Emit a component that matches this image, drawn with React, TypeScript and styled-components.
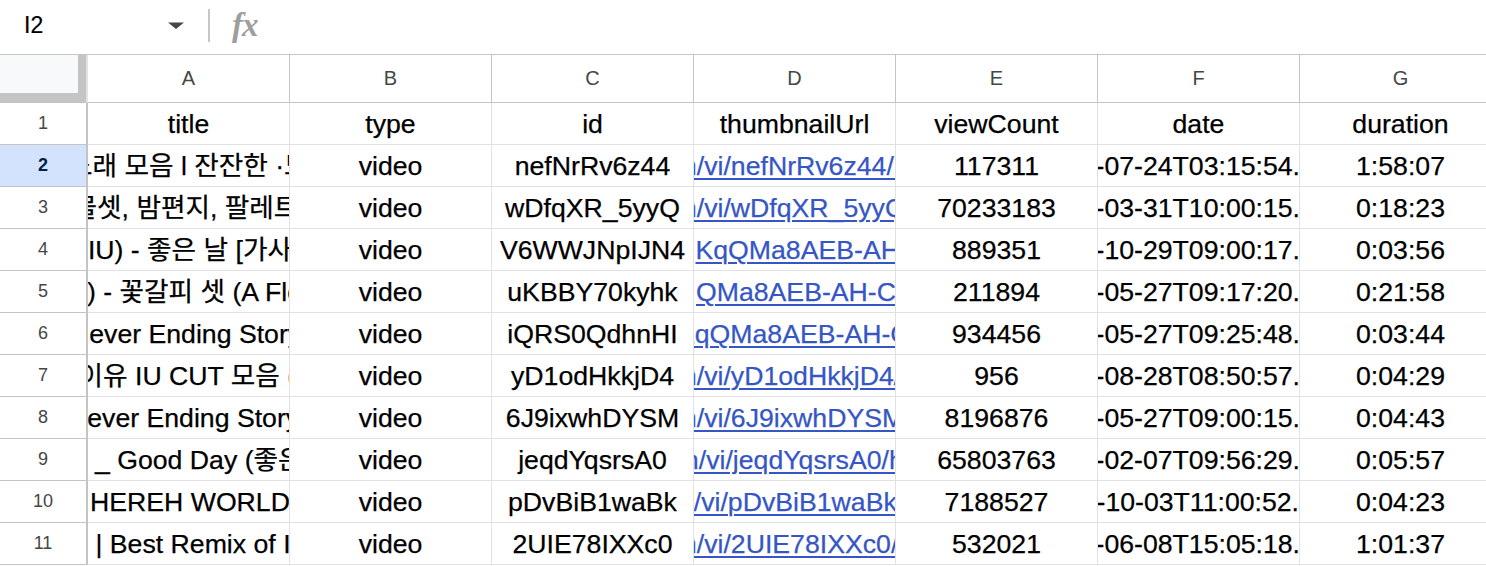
import styled, { createGlobalStyle } from 'styled-components'

const GlobalStyle = createGlobalStyle`
  html, body {
    margin: 0;
    background: #fff;
  }
  body {
    font-family: 'Liberation Sans', 'Noto Sans CJK KR', Arial, sans-serif;
  }
`

const Sheet = styled.div`
  width: 1486px;
  height: 566px;
  overflow: hidden;
  background: #fff;
`

const FormulaBar = styled.div`
  display: flex;
  align-items: center;
  height: 55px;
  padding-bottom: 3px;
  box-sizing: border-box;
  border-bottom: 1px solid #c4c7c5;
`

const NameBox = styled.div`
  width: 200px;
  box-sizing: border-box;
  padding: 0 16px 0 24px;
  display: flex;
  align-items: center;
  justify-content: space-between;
  font-size: 23px;
  color: #000;
  -webkit-text-stroke: 0.2px currentColor;
`

const Divider = styled.div`
  width: 2px;
  height: 33px;
  margin-left: 8px;
  background: #c7c7c7;
`

const FxLabel = styled.span`
  margin-left: 22px;
  font-family: 'Liberation Serif', serif;
  font-style: italic;
  font-weight: 700;
  font-size: 33px;
  letter-spacing: -1px;
  color: #9e9e9e;
`

const Grid = styled.div`
  display: grid;
  grid-template-columns: 88px repeat(7, 202px);
  grid-template-rows: 48px;
  grid-auto-rows: 42px;
`

const Corner = styled.div`
  box-sizing: border-box;
  background: #c4c4c4;
  border-right: 2px solid #e3e3e3;
  border-bottom: 1px solid #c4c4c4;

  &::before {
    content: '';
    display: block;
    width: 78px;
    height: 38px;
    background: #f8f9fa;
  }
`

const ColHead = styled.div`
  box-sizing: border-box;
  display: flex;
  align-items: center;
  justify-content: center;
  border-right: 1px solid #c4c4c4;
  border-bottom: 1px solid #c4c4c4;
  font-size: 20px;
  color: #444746;
`

const RowHead = styled.div<{ $active?: boolean }>`
  box-sizing: border-box;
  display: flex;
  align-items: center;
  justify-content: center;
  border-right: 2px solid #c4c4c4;
  border-bottom: 1px solid #c4c4c4;
  font-size: 18px;
  background: ${p => (p.$active ? '#d3e3fd' : '#fff')};
  color: ${p => (p.$active ? '#041e49' : '#444746')};
  font-weight: ${p => (p.$active ? 700 : 400)};
`

const Cell = styled.div<{ $start?: boolean }>`
  box-sizing: border-box;
  display: flex;
  align-items: flex-end;
  justify-content: ${p => (p.$start ? 'flex-start' : 'center')};
  padding-bottom: 5px;
  overflow: hidden;
  border-right: 1px solid #e1e1e1;
  border-bottom: 1px solid #e1e1e1;
  font-size: 26.67px;
  line-height: 30px;
  white-space: nowrap;
  color: #000;
  -webkit-text-stroke: 0.25px currentColor;
`

// text scrolled sideways inside a clipped cell
const Slice = styled.span<{ $shift: number }>`
  flex: none;
  margin-left: ${p => p.$shift}px;
`

const LinkSlice = styled(Slice)`
  color: #3556c4;
  text-decoration: underline;
  text-decoration-thickness: 2px;
  text-underline-offset: 3px;
`

const Caret = () => (
  <svg width="16" height="8" viewBox="0 0 16 8">
    <path d="M0 0.5 H16 L8 7 Z" fill="#444746" />
  </svg>
)

const thumbUrl = (id: string) => `https://i.ytimg.com/vi/${id}/hqdefault.jpg`
const sqp = 'KqQMa8AEB-AH-CYAC0AWKAgwIABABGGUgXihUMA8='

type Row = {
  title: [string, number]
  id: string
  thumb: [string, number]
  views: string
  date: string
  duration: string
}

const rows: Row[] = [
  { title: ['노래 모음 l 잔잔한 ·노래', -20], id: 'nefNrRv6z44', thumb: [thumbUrl('nefNrRv6z44'), -212], views: '117311', date: '2023-07-24T03:15:54.000Z', duration: '1:58:07' },
  { title: ['스물셋, 밤편지, 팔레트, 너랑 나', -40], id: 'wDfqXR_5yyQ', thumb: [thumbUrl('wDfqXR_5yyQ'), -212], views: '70233183', date: '2019-03-31T10:00:15.000Z', duration: '0:18:23' },
  { title: ['(IU) - 좋은 날 [가사/Lyrics]', -9], id: 'V6WWJNpIJN4', thumb: [sqp, 1.5], views: '889351', date: '2015-10-29T09:00:17.000Z', duration: '0:03:56' },
  { title: [') - 꽃갈피 셋 (A Flower Bookmark 3)', -1], id: 'uKBBY70kyhk', thumb: [sqp.slice(2), 2], views: '211894', date: '2023-05-27T09:17:20.000Z', duration: '0:21:58' },
  { title: ['Never Ending Story', -18], id: 'iQRS0QdhnHI', thumb: [sqp, -17], views: '934456', date: '2023-05-27T09:25:48.000Z', duration: '0:03:44' },
  { title: ['아이유 IU CUT 모음 (2020)', -34], id: 'yD1odHkkjD4', thumb: [thumbUrl('yD1odHkkjD4'), -212], views: '956', date: '2020-08-28T08:50:57.000Z', duration: '0:04:29' },
  { title: ['Never Ending Story (Live)', -20], id: '6J9ixwhDYSM', thumb: [thumbUrl('6J9ixwhDYSM'), -212], views: '8196876', date: '2023-05-27T09:00:15.000Z', duration: '0:04:43' },
  { title: ['_ Good Day (좋은 날)', 7], id: 'jeqdYqsrsA0', thumb: [thumbUrl('jeqdYqsrsA0'), -210], views: '65803763', date: '2017-02-07T09:56:29.000Z', duration: '0:05:57' },
  { title: ['HEREH WORLD TOUR', 2], id: 'pDvBiB1waBk', thumb: [thumbUrl('pDvBiB1waBk'), -215], views: '7188527', date: '2024-10-03T11:00:52.000Z', duration: '0:04:23' },
  { title: ['| Best Remix of IU Songs', 7.5], id: '2UIE78IXXc0', thumb: [thumbUrl('2UIE78IXXc0'), -212], views: '532021', date: '2022-06-08T15:05:18.000Z', duration: '1:01:37' },
]

const columns = ['A', 'B', 'C', 'D', 'E', 'F', 'G']
const fields = ['title', 'type', 'id', 'thumbnailUrl', 'viewCount', 'date', 'duration']

export default function App() {
  return (
    <Sheet>
      <GlobalStyle />
      <FormulaBar>
        <NameBox>
          <span>I2</span>
          <Caret />
        </NameBox>
        <Divider />
        <FxLabel>fx</FxLabel>
      </FormulaBar>

      <Grid>
        <Corner />
        {columns.map(c => (
          <ColHead key={c}>{c}</ColHead>
        ))}

        <RowHead>1</RowHead>
        {fields.map(f => (
          <Cell key={f}>{f}</Cell>
        ))}

        {rows.map((r, i) => (
          <>
            <RowHead key={`h${i}`} $active={i === 0}>
              {i + 2}
            </RowHead>
            <Cell $start>
              <Slice $shift={r.title[1]}>{r.title[0]}</Slice>
            </Cell>
            <Cell>video</Cell>
            <Cell>{r.id}</Cell>
            <Cell $start>
              <LinkSlice $shift={r.thumb[1]}>{r.thumb[0]}</LinkSlice>
            </Cell>
            <Cell>{r.views}</Cell>
            <Cell>{r.date}</Cell>
            <Cell>{r.duration}</Cell>
          </>
        ))}
      </Grid>
    </Sheet>
  )
}
